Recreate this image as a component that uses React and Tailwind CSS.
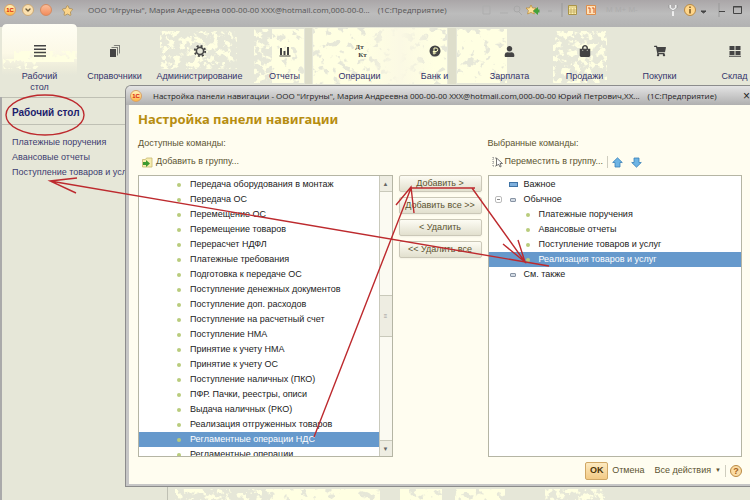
import React, { useState } from 'react';
import { ChevronDown } from 'lucide-react';
import { FaStar, FaUser, FaShoppingCart, FaShoppingBag } from 'react-icons/fa';

const available = [
  'Передача оборудования в монтаж',
  'Передача ОС',
  'Перемещение ОС',
  'Перемещение товаров',
  'Перерасчет НДФЛ',
  'Платежные требования',
  'Подготовка к передаче ОС',
  'Поступление денежных документов',
  'Поступление доп. расходов',
  'Поступление на расчетный счет',
  'Поступление НМА',
  'Принятие к учету НМА',
  'Принятие к учету ОС',
  'Поступление наличных (ПКО)',
  'ПФР. Пачки, реестры, описи',
  'Выдача наличных (РКО)',
  'Реализация отгруженных товаров',
  'Регламентные операции НДС',
  'Регламентные операции',
];

const chosen = [
  'Платежные поручения',
  'Авансовые отчеты',
  'Поступление товаров и услуг',
  'Реализация товаров и услуг',
];

const Logo = () => (
  <span className="flex h-3 w-3 shrink-0 items-center justify-center rounded-full border border-[#d9a066] bg-gradient-to-b from-[#fff3b8] to-[#ffb640] text-[6px] font-bold leading-none text-[#d8200c]">
    1C
  </span>
);

const SectionIcon = ({ name }) => {
  if (name === 'user') return <FaUser size={11} />;
  if (name === 'bag') return <FaShoppingBag size={12} />;
  if (name === 'cart') return <FaShoppingCart size={12} />;
  return (
    <svg width="14" height="14" viewBox="0 0 14 14" fill="currentColor">
      {name === 'desk' && <path d="M1 1h12v1.5H1zM1 4.4h12v1.5H1zM1 7.8h12v1.5H1zM1 11.2h12v1.5H1z" />}
      {name === 'books' && (
        <>
          <path d="M2 5h6v8H2z" />
          <path d="M3 4l1-1h6v8l-1 1V4zM5.500 2l1-1H12v8l-1 1V2z" opacity=".65" />
        </>
      )}
      {name === 'gear' && (
        <g fill="none" stroke="currentColor">
          <circle cx="7" cy="7" r="3.600" strokeWidth="1.600" />
          <circle cx="7" cy="7" r="5.200" strokeWidth="1.800" strokeDasharray="2 2.084" />
        </g>
      )}
      {name === 'chart' && <path d="M2 4h2v7H2zM5.500 7h2v4h-2zM9 3h2v8H9zM1.500 11.500h11v1h-11z" />}
      {name === 'ruble' && (
        <>
          <circle cx="7" cy="7" r="5.500" />
          <path d="M6 10.500V4h2a1.600 1.600 0 0 1 0 3.500H4.800M4.800 9h3.400" fill="none" stroke="#ffffc4" />
        </>
      )}
      {name === 'boxes' && <path d="M1.500 2h5v4h-5zM7.500 2h5v4h-5zM1.500 7h5v4h-5zM7.500 7h5v4h-5zM1 11.700h12v1H1z" />}
    </svg>
  );
};

const sections = [
  { title: 'Справочники', icon: 'books' },
  { title: 'Администрирование', icon: 'gear', wide: true },
  { title: 'Отчеты', icon: 'chart' },
  { title: 'Операции', icon: 'dtkt' },
  { title: 'Банк и', icon: 'ruble' },
  { title: 'Зарплата', icon: 'user' },
  { title: 'Продажи', icon: 'bag' },
  { title: 'Покупки', icon: 'cart' },
  { title: 'Склад', icon: 'boxes' },
];

// Yellow speckled texture behind the sections and the active tab
const Texture = () => (
  <svg className="pointer-events-none absolute inset-0 h-full w-full">
    <defs>
      <filter id="dense" x="0" y="0" width="1" height="1">
        <feTurbulence type="fractalNoise" baseFrequency="0.12" numOctaves="3" seed="4" />
        <feColorMatrix values="0 0 0 0 1  0 0 0 0 1  0 0 0 0 .76  0 12 0 0 -4" />
        <feComposite in2="SourceGraphic" operator="in" />
      </filter>
      <filter id="sparse" x="0" y="0" width="1" height="1">
        <feTurbulence type="fractalNoise" baseFrequency="0.16" numOctaves="4" seed="9" />
        <feColorMatrix values="0 0 0 0 1  0 0 0 0 1  0 0 0 0 .76  0 10 0 0 -5" />
        <feComposite in2="SourceGraphic" operator="in" />
      </filter>
      <linearGradient id="pale">
        <stop offset="0" stopColor="#fbf9e4" stopOpacity="0" />
        <stop offset=".5" stopColor="#fbf9e4" />
        <stop offset="1" stopColor="#fbf9e4" stopOpacity="0" />
      </linearGradient>
      <linearGradient id="tab" x2="0" y2="1">
        <stop offset="0" stopColor="#fffef4" />
        <stop offset=".4" stopColor="#fcf9e6" />
        <stop offset=".58" stopColor="#eeeddb" />
        <stop offset=".7" stopColor="#e6e7d8" />
      </linearGradient>
    </defs>
    <path d="M2 97V29q0-5 5-5h65q5 0 5 5v68z" fill="url(#tab)" />
    <rect x="14" y="51" width="63" height="11" filter="url(#dense)" />
    <rect x="3" y="59" width="36" height="10" filter="url(#sparse)" />
    <rect x="160" y="31" width="77" height="38" filter="url(#sparse)" />
    <rect x="254" y="29" width="26" height="54" filter="url(#sparse)" />
    <rect x="272" y="29" width="32" height="54" filter="url(#dense)" />
    <rect x="305" y="28" width="7" height="56" fill="#dcdcc9" />
    <rect x="313" y="28" width="134" height="56" filter="url(#dense)" />
    <rect x="365" y="28" width="70" height="56" fill="url(#pale)" />
    <rect x="448" y="28" width="8" height="56" fill="#dedecb" />
    <rect x="457" y="29" width="50" height="54" filter="url(#dense)" />
    <rect x="553" y="31" width="54" height="52" filter="url(#sparse)" />
    <rect x="175" y="489" width="95" height="11" filter="url(#sparse)" />
    <rect x="270" y="489" width="110" height="11" filter="url(#dense)" />
    <rect x="400" y="489" width="42" height="11" filter="url(#dense)" />
    <rect x="455" y="489" width="50" height="11" filter="url(#dense)" />
    <rect x="545" y="489" width="60" height="11" filter="url(#sparse)" />
  </svg>
);

const TitleBar = () => (
  <header className="flex h-[27px] items-start gap-2 overflow-hidden bg-gradient-to-b from-[#aaa6a8] via-[#bcbcbc] to-[#b2b2b2] pl-1 pt-1 whitespace-nowrap">
    <div className="flex h-3 w-[76px] shrink-0 items-center gap-[6px]">
      <Logo />
      <button aria-label="Меню" className="flex h-3 w-3 items-center justify-center rounded-full border border-[#c9a878] bg-[#fbe0ae] text-[#6b5a3a]">
        <ChevronDown size={8} strokeWidth={4} />
      </button>
      <button aria-label="Закрыть окно" className="h-3 w-3 rounded-full border border-[#d58a60] bg-gradient-to-b from-[#f9bd98] to-[#f38c5c]" />
      <button aria-label="Избранное" className="ml-1 text-[#fbd48a]">
        <FaStar size={11} stroke="#a88a50" strokeWidth={40} />
      </button>
    </div>
    <span className="shrink-0 font-['Open_Sans',sans-serif] text-[8px] leading-3 text-[#555]">
      ООО "Игруны", Мария Андреевна 000-00-00 XXX@hotmail.com,000-00-0...
    </span>
    <span className="shrink-0 font-['Open_Sans',sans-serif] text-[8px] leading-3 text-[#555]">(1С:Предприятие)</span>
    <div className="ml-auto flex h-3 shrink-0 items-center text-[#555]">
      <svg width="124" height="14" viewBox="0 0 124 14" fill="none">
        <path d="M1 3h7v8H1zM18 10h8" stroke="#adadad" />
        <circle cx="35" cy="6" r="3" stroke="#a8a8a8" />
        <path d="M37 9l3 3M66 8h4" stroke="#a8a8a8" />
        <path d="M49 2l1.500 3h3.500l-2.500 2.500.8 3.500-3.300-1.600L45.600 11l.8-3.500L44 5h3.500z" fill="#ffe29a" stroke="#b98a35" strokeWidth=".7" />
        <path d="M56 4l-5 4 5 4V9.500h1.500v-3H56z" fill="#44a13a" />
        <path d="M80 0v14" stroke="#999" />
        <path d="M86.500 2.500h8v9h-8z" fill="#fff2b0" stroke="#aa9448" />
        <path d="M87 4h7M87 7h7M87 9h7M89 5v6M92 5v6" stroke="#b7a058" strokeWidth=".7" />
        <path d="M104.500 2.500h9v9h-9z" fill="#ffe2b8" stroke="#dd8f4c" />
        <path d="M106 5h2v5M110 5h2v5" stroke="#d35b26" />
      </svg>
      <span className="w-[58px] text-[8px] leading-3 text-[#acacac]">M M+ M-</span>
      <svg className="shrink-0" width="86" height="14" viewBox="0 0 86 14" fill="none">
        <path d="M-2 0v14M55 0v14" stroke="#999" />
        <path d="M6 2v3l3 2 3-2V2M9 7v6" stroke="#eee" strokeWidth="2" />
        <path d="M5 2v3l4 3 4-3V2" stroke="#888" strokeWidth=".7" />
        <circle cx="26" cy="7" r="5.500" fill="#ffd68a" stroke="#b98a45" />
        <path d="M26 3.500V5M26 6v4.500" stroke="#7a5520" strokeWidth="1.500" />
        <path d="M37 8h5l-2.500 2zM55 8.500h6" fill="#444" stroke="#444" />
        <path d="M69.500 3.500h8v7h-8zM69 4h9" stroke="#444" />
      </svg>
    </div>
  </header>
);

const Sections = () => (
  <nav className="relative flex h-[70px] pl-[2px] text-center text-[#33336b]">
    <button className="flex w-[75px] shrink-0 flex-col items-center pt-4">
      <span className="flex h-4 items-center text-[#444]">
        <SectionIcon name="desk" />
      </span>
      <span className="mt-[12px] w-10 leading-[11px]">Рабочий стол</span>
    </button>
    {sections.map((s) => (
      <button
        key={s.title}
        className={`flex shrink-0 flex-col items-center pt-4 ${s.wide ? 'w-[95px]' : 'w-[75px]'}`}
      >
        <span className="flex h-4 items-center text-[#444]">
          {s.icon === 'dtkt' ? (
            <span className="flex flex-col font-['Liberation_Serif',serif] text-[7px] font-bold leading-[8px]">
              <span>Дт</span>
              <span className="pl-[6px]">Кт</span>
            </span>
          ) : (
            <SectionIcon name={s.icon} />
          )}
        </span>
        <span className="mt-[12px] leading-[11px] whitespace-nowrap">{s.title}</span>
      </button>
    ))}
  </nav>
);

const Row = ({ text, selected, onClick, indent }) => (
  <li>
    <button
      onClick={onClick}
      className={`flex h-[15px] w-full items-center gap-[9px] text-left whitespace-nowrap ${indent} ${
        selected ? 'bg-[#6699cc] text-white' : 'text-[#222]'
      }`}
    >
      <span className="h-1 w-1 rounded-full bg-[#b9cc7c]" />
      {text}
    </button>
  </li>
);

const MoveButton = ({ children }) => (
  <button className="h-[17px] rounded-[2px] border border-[#cbc8b8] bg-gradient-to-b from-[#fdfcf4] to-[#e2e0ce] text-[#5c5430] shadow-xs">
    {children}
  </button>
);

const BlueArrow = ({ down }) => (
  <svg width="11" height="11" viewBox="0 0 11 11" className={down ? 'rotate-180' : ''}>
    <path d="M5.500.8L10.300 5.500H8v4.500H3V5.500H.7z" fill="#6db4e4" stroke="#3a80b8" strokeWidth=".8" />
  </svg>
);

const Dialog = () => {
  const [left, setLeft] = useState('Регламентные операции НДС');
  const [right, setRight] = useState('Реализация товаров и услуг');

  return (
    <section className="absolute bottom-[13px] left-[125px] right-0 top-[85px] flex flex-col overflow-hidden rounded-tl-[6px] border border-r-0 border-[#8c8c8c] bg-[#c6c6c6] pb-[2px] pl-[3px]">
      <div className="-ml-[3px] flex h-[19px] shrink-0 items-center overflow-hidden bg-gradient-to-b from-[#e4e4e4] to-[#b0b0b0] pl-1 text-[#222] whitespace-nowrap">
        <Logo />
        <span className="ml-[11px] font-['Open_Sans',sans-serif] text-[8px]">
          Настройка панели навигации - ООО "Игруны", Мария Андреевна 000-00-00 XXX@hotmail.com,000-00-00 Юрий Петрович,XX...
        </span>
        <span className="ml-2 font-['Open_Sans',sans-serif] text-[8px]">(1С:Предприятие)</span>
        <button aria-label="Закрыть" className="ml-auto text-[12px] leading-none">×</button>
      </div>

      <div className="flex min-h-0 flex-1 flex-col bg-[#fffdf0] pl-[9px] pr-2">
        <h1 className="mt-1 font-['Noto_Sans',sans-serif] text-[13px] font-bold leading-5 text-[#b78d10]">Настройка панели навигации</h1>

        <div className="mt-2 flex min-h-0 flex-1 gap-[6px]">
          <div className="flex min-w-0 flex-1 flex-col">
            <h2 className="leading-[12px] text-[#5c5430]">Доступные команды:</h2>
            <div className="flex h-[26px] items-center pl-1">
              <button className="flex items-center gap-[3px] text-[#5c5430]">
                <svg width="11" height="11" viewBox="0 0 11 11">
                  <path d="M.5 2.500h3l1-1.500h5.500v9H.5z" fill="#f7edb0" stroke="#c7b770" strokeWidth=".8" />
                  <path d="M4 3v2H1v3h3v2l4-3.500z" fill="#3c9a30" />
                </svg>
                Добавить в группу...
              </button>
            </div>
            <div className="flex min-h-0 flex-1 border border-[#b5b5a4] bg-white">
              <ul className="min-w-0 flex-1 overflow-hidden pt-px">
                {available.map((t) => (
                  <Row key={t} text={t} selected={t === left} onClick={() => setLeft(t)} indent="pl-[38px]" />
                ))}
              </ul>
              <div className="flex w-[13px] flex-col border-l border-[#c9c9bb] bg-[#fbfaf2]">
                <button aria-label="Вверх" className="h-4 border-b border-[#c9c9bb] bg-[#eeede2] text-[6px] leading-none text-[#666]">▲</button>
                <div className="flex-1" />
                <div className="flex h-[42px] items-center justify-center border-y border-[#c9c9bb] bg-[#eeede2] text-[6px] text-[#999]">≡</div>
                <div className="flex-1" />
                <button aria-label="Вниз" className="h-4 border-t border-[#c9c9bb] bg-[#eeede2] text-[6px] leading-none text-[#666]">▼</button>
              </div>
            </div>
          </div>

          <div className="flex w-[83px] shrink-0 flex-col gap-[5px] pt-[38px]">
            <MoveButton>Добавить &gt;</MoveButton>
            <MoveButton>Добавить все &gt;&gt;</MoveButton>
            <MoveButton>&lt; Удалить</MoveButton>
            <MoveButton>&lt;&lt; Удалить все</MoveButton>
          </div>

          <div className="flex min-w-0 flex-1 flex-col">
            <h2 className="leading-[12px] text-[#5c5430]">Выбранные команды:</h2>
            <div className="flex h-[26px] items-center gap-2 pl-1">
              <button className="flex items-center gap-[2px] text-[#5c5430] whitespace-nowrap">
                <svg width="11" height="12" viewBox="0 0 11 12" fill="none">
                  <path d="M1 1v10M1 2h3M1 6h2M1 10h3" stroke="#888" strokeDasharray="1 1" />
                  <path d="M4.500 2v8l2-2 1.500 3 1.200-.6L8 7.500h2.500z" fill="#fff" stroke="#555" strokeWidth=".8" />
                </svg>
                Переместить в группу...
              </button>
              <span className="-ml-1 h-3 w-px bg-[#cfcdbf]" />
              <button aria-label="Выше" className="-ml-1"><BlueArrow /></button>
              <button aria-label="Ниже"><BlueArrow down /></button>
            </div>
            <ul className="min-h-0 flex-1 overflow-hidden border border-[#b5b5a4] bg-white pt-px text-[#222]">
              <li className="flex h-[15px] items-center gap-[6px] pl-5">
                <span className="h-[5px] w-[9px] border border-[#3f73a5] bg-[#7fb0dd]" />
                Важное
              </li>
              <li className="flex h-[15px] items-center pl-[6px]">
                <button aria-label="Свернуть" className="flex h-[7px] w-[7px] items-center justify-center rounded-[2px] border border-[#bbb]">
                  <span className="h-px w-[3px] bg-[#888]" />
                </button>
                <span className="ml-2 mr-[8px] h-1 w-[6px] rounded-[1px] border border-[#8793a3] bg-[#d3dbe4]" />
                Обычное
              </li>
              {chosen.map((t) => (
                <Row key={t} text={t} selected={t === right} onClick={() => setRight(t)} indent="pl-[37px]" />
              ))}
              <li className="flex h-[15px] items-center gap-[8px] pl-[21px]">
                <span className="h-1 w-[6px] rounded-[1px] border border-[#8793a3] bg-[#d3dbe4]" />
                См. также
              </li>
            </ul>
          </div>
        </div>

        <footer className="flex h-[27px] shrink-0 items-center justify-end text-[#5c5430]">
          <button className="h-[18px] w-[23px] rounded-[2px] border border-[#d0a765] bg-gradient-to-b from-[#fdeac0] to-[#f3ca85] font-bold text-[#4d3408]">OK</button>
          <button className="ml-1">Отмена</button>
          <button className="ml-[10px] flex items-center gap-1">
            Все действия
            <span className="text-[6px]">▼</span>
          </button>
          <span className="ml-1 h-3 w-px bg-[#cfcdbf]" />
          <button aria-label="Справка" className="ml-1 h-3 w-3 rounded-full border border-[#b98a45] bg-[#fbdca4] font-bold leading-[10px] text-[#a3601a]">?</button>
        </footer>
      </div>
    </section>
  );
};

// Red pen marks: where the command goes and where it shows up
const Marks = () => (
  <svg className="pointer-events-none absolute left-0 top-0" width="750" height="500" fill="none" stroke="#bd2a2e" strokeWidth="1.400">
    <ellipse cx="45" cy="115" rx="39" ry="20" />
    <path d="M549 266L50 181M77 178L50 181L76 193" />
    <path d="M314 437L411 188M396 205L411 187L414 213" />
    <path d="M411 188H475M472 188L525 262M503 244L525 262L518 240" />
  </svg>
);

export default function App() {
  return (
    <div className="relative flex min-h-screen flex-col overflow-hidden bg-[#e6e7d8] font-['Liberation_Sans',Arial,sans-serif] text-[9px]">
      <TitleBar />
      <Texture />
      <Sections />
      <div className="flex flex-1 border-l-2 border-[#aaa]">
        <aside className="w-[166px] border-r border-t border-[#bfc0b4] text-[#3c3c70]">
          <h2 className="border-b border-[#bfc0b4] pl-[10px] pt-1 text-[10px] font-bold leading-[22px] text-[#1c1c6c]">Рабочий стол</h2>
          <ul className="mt-[10px] pl-[10px] leading-[15px] whitespace-nowrap">
            <li><a href="#orders">Платежные поручения</a></li>
            <li><a href="#reports">Авансовые отчеты</a></li>
            <li><a href="#income">Поступление товаров и услуг</a></li>
          </ul>
        </aside>
        <main className="flex-1 border-t border-[#bfc0b4]" />
      </div>
      <Dialog />
      <Marks />
    </div>
  );
}
